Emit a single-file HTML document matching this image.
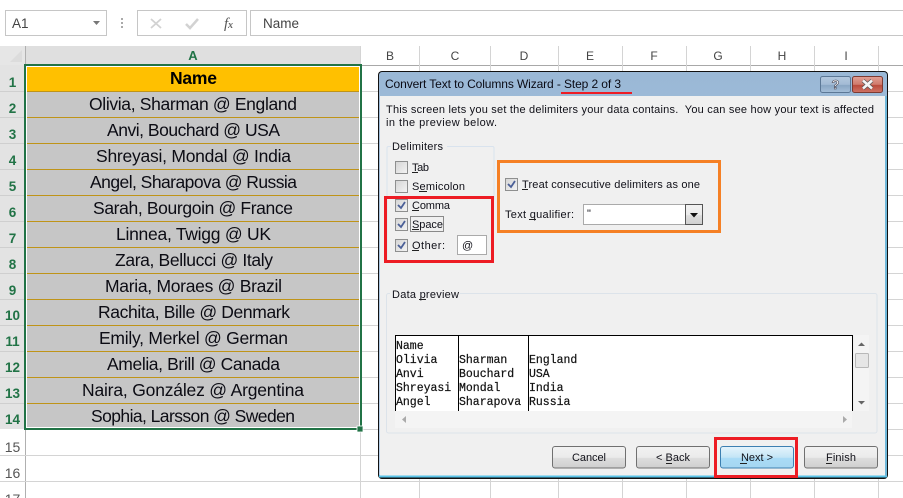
<!DOCTYPE html>
<html><head><meta charset="utf-8"><style>
html,body{margin:0;padding:0;background:#fff;width:903px;height:498px;overflow:hidden}
svg{display:block}
.c{font:17.5px "Liberation Sans",sans-serif;fill:#0c0c14;text-anchor:middle}
.h{font:12px "Liberation Sans",sans-serif;fill:#444;text-anchor:middle}
.n{font:bold 13.5px "Liberation Sans",sans-serif;fill:#217346;text-anchor:middle}
.r{font:14px "Liberation Sans",sans-serif;fill:#555;text-anchor:middle}
.d{font:11px "Liberation Sans",sans-serif;fill:#101018}
.m{font:11.5px "Liberation Mono",monospace;fill:#111;stroke:#111;stroke-width:.2}
.b{font:11px "Liberation Sans",sans-serif;fill:#101018;text-anchor:middle}
</style></head><body>
<svg width="903" height="498" viewBox="0 0 903 498" xmlns="http://www.w3.org/2000/svg">
<defs>
<linearGradient id="tb" x1="0" y1="0" x2="0" y2="1"><stop offset="0" stop-color="#9ab8d6"/><stop offset="1" stop-color="#b9d1ea"/></linearGradient>
<linearGradient id="btn" x1="0" y1="0" x2="0" y2="1"><stop offset="0" stop-color="#f2f2f2"/><stop offset=".5" stop-color="#ebebeb"/><stop offset=".55" stop-color="#dddddd"/><stop offset="1" stop-color="#cfcfcf"/></linearGradient>
<linearGradient id="nxt" x1="0" y1="0" x2="0" y2="1"><stop offset="0" stop-color="#e5f4fc"/><stop offset=".5" stop-color="#c4e5f6"/><stop offset=".55" stop-color="#a9dbf6"/><stop offset="1" stop-color="#a5d6f1"/></linearGradient>
<linearGradient id="hp" x1="0" y1="0" x2="0" y2="1"><stop offset="0" stop-color="#b3c8de"/><stop offset=".5" stop-color="#a3bbd5"/><stop offset=".55" stop-color="#8aa6c4"/><stop offset="1" stop-color="#a5bfd9"/></linearGradient>
<linearGradient id="cl" x1="0" y1="0" x2="0" y2="1"><stop offset="0" stop-color="#e2a095"/><stop offset=".5" stop-color="#cf7a6c"/><stop offset=".55" stop-color="#bb4a3b"/><stop offset="1" stop-color="#cf7466"/></linearGradient>
<linearGradient id="cb" x1="0" y1="0" x2="1" y2="1"><stop offset="0" stop-color="#d4d4d4"/><stop offset="1" stop-color="#f4f4f4"/></linearGradient>
</defs>

<!-- formula bar -->
<rect x="5.500" y="10.500" width="101" height="25" fill="#fff" stroke="#c6c6c6"/>
<text x="12" y="28" style="font:13.500px 'Liberation Sans',sans-serif;fill:#444">A1</text>
<path d="M93 21h7l-3.500 4z" fill="#777"/>
<g fill="#aaa"><rect x="121" y="18" width="2" height="2"/><rect x="121" y="22" width="2" height="2"/><rect x="121" y="26" width="2" height="2"/></g>
<rect x="137.500" y="10.500" width="109" height="25" fill="#fff" stroke="#c6c6c6"/>
<path d="M151 19l10 9M161 19l-10 9" stroke="#d2d2d2" stroke-width="1.800" fill="none"/>
<path d="M186 24l4 4 8-9" stroke="#d2d2d2" stroke-width="2.500" fill="none"/>
<text x="224" y="28" style="font:italic 15px 'Liberation Serif',serif;fill:#555">f</text><text x="228" y="28" style="font:italic bold 10px 'Liberation Serif',serif;fill:#666">x</text>
<rect x="250.500" y="10.500" width="660" height="25" fill="#fff" stroke="#c6c6c6"/>
<text x="263" y="28" style="font:13.500px 'Liberation Sans',sans-serif;fill:#444" textLength="36">Name</text>

<!-- headers -->
<rect x="0" y="46" width="25" height="452" fill="#fff"/>
<rect x="0" y="46" width="25" height="19" fill="#e6e6e6"/>
<path d="M10 62L22 50V62z" fill="#dcdcdc"/>
<rect x="25" y="46" width="336" height="19" fill="#dfdfdf"/>
<rect x="0" y="65" width="25" height="364" fill="#e3e3e3"/>
<g fill="#cfcfcf"><rect x="0" y="91" width="25" height="1"/><rect x="0" y="117" width="25" height="1"/><rect x="0" y="143" width="25" height="1"/><rect x="0" y="169" width="25" height="1"/><rect x="0" y="195" width="25" height="1"/><rect x="0" y="221" width="25" height="1"/><rect x="0" y="247" width="25" height="1"/><rect x="0" y="273" width="25" height="1"/><rect x="0" y="299" width="25" height="1"/><rect x="0" y="325" width="25" height="1"/><rect x="0" y="351" width="25" height="1"/><rect x="0" y="377" width="25" height="1"/><rect x="0" y="403" width="25" height="1"/></g>
<rect x="25" y="65" width="878" height="1" fill="#a8a8a8"/>
<rect x="25" y="46" width="1" height="452" fill="#b0b0b0"/>
<g fill="#d4d4d4">
<rect x="360" y="46" width="1" height="452"/><rect x="419" y="46" width="1" height="452"/><rect x="490" y="46" width="1" height="452"/><rect x="558" y="46" width="1" height="452"/><rect x="622" y="46" width="1" height="452"/><rect x="686" y="46" width="1" height="452"/><rect x="750" y="46" width="1" height="452"/><rect x="814" y="46" width="1" height="452"/><rect x="878" y="46" width="1" height="452"/>
<rect x="361" y="91" width="542" height="1"/><rect x="361" y="117" width="542" height="1"/><rect x="361" y="143" width="542" height="1"/><rect x="361" y="169" width="542" height="1"/><rect x="361" y="195" width="542" height="1"/><rect x="361" y="221" width="542" height="1"/><rect x="361" y="247" width="542" height="1"/><rect x="361" y="273" width="542" height="1"/><rect x="361" y="299" width="542" height="1"/><rect x="361" y="325" width="542" height="1"/><rect x="361" y="351" width="542" height="1"/><rect x="361" y="377" width="542" height="1"/><rect x="361" y="403" width="542" height="1"/><rect x="361" y="429" width="542" height="1"/>
<rect x="0" y="455" width="903" height="1"/><rect x="0" y="481" width="903" height="1"/>
</g>
<text class="n" x="193" y="60" style="font-size:13px">A</text>
<g class="h"><text x="390" y="60">B</text><text x="455" y="60">C</text><text x="524" y="60">D</text><text x="590" y="60">E</text><text x="654" y="60">F</text><text x="718" y="60">G</text><text x="782" y="60">H</text><text x="846" y="60">I</text></g>

<g class="n"><text x="12.500" y="87">1</text><text x="12.500" y="113">2</text><text x="12.500" y="139">3</text><text x="12.500" y="165">4</text><text x="12.500" y="191">5</text><text x="12.500" y="217">6</text><text x="12.500" y="243">7</text><text x="12.500" y="269">8</text><text x="12.500" y="295">9</text><text x="12.500" y="320">10</text><text x="12.500" y="346">11</text><text x="12.500" y="372">12</text><text x="12.500" y="398">13</text><text x="12.500" y="424">14</text></g>
<g class="r"><text x="12.500" y="452">15</text><text x="12.500" y="478">16</text><text x="12.500" y="504">17</text></g>

<!-- selected cells -->
<rect x="27" y="67" width="332" height="361" fill="#c6c6c6"/>
<rect x="27" y="67" width="332" height="24" fill="#ffc000"/>
<g fill="#bf9418">
<rect x="27" y="91" width="332" height="1"/><rect x="27" y="117" width="332" height="1"/><rect x="27" y="143" width="332" height="1"/><rect x="27" y="169" width="332" height="1"/><rect x="27" y="195" width="332" height="1"/><rect x="27" y="221" width="332" height="1"/><rect x="27" y="247" width="332" height="1"/><rect x="27" y="273" width="332" height="1"/><rect x="27" y="299" width="332" height="1"/><rect x="27" y="325" width="332" height="1"/><rect x="27" y="351" width="332" height="1"/><rect x="27" y="377" width="332" height="1"/><rect x="27" y="403" width="332" height="1"/>
</g>
<rect x="26.500" y="66.500" width="333" height="361" fill="none" stroke="#fff"/>
<rect x="25" y="65" width="336" height="364" fill="none" stroke="#217346" stroke-width="2"/>
<rect x="357" y="426" width="6" height="6" fill="#217346" stroke="#fff" stroke-width=".8"/>

<text class="c" x="193.500" y="84" style="font-weight:bold;fill:#000" textLength="47">Name</text>
<text class="c" x="193" y="110" textLength="208">Olivia, Sharman @ England</text>
<text class="c" x="193.500" y="136" textLength="173">Anvi, Bouchard @ USA</text>
<text class="c" x="193.500" y="162" textLength="195">Shreyasi, Mondal @ India</text>
<text class="c" x="193.500" y="188" textLength="207">Angel, Sharapova @ Russia</text>
<text class="c" x="193" y="214" textLength="200">Sarah, Bourgoin @ France</text>
<text class="c" x="193.500" y="240" textLength="155">Linnea, Twigg @ UK</text>
<text class="c" x="194" y="266" textLength="158">Zara, Bellucci @ Italy</text>
<text class="c" x="193.500" y="292" textLength="177">Maria, Moraes @ Brazil</text>
<text class="c" x="194" y="318" textLength="192">Rachita, Bille @ Denmark</text>
<text class="c" x="193.500" y="344" textLength="189">Emily, Merkel @ German</text>
<text class="c" x="193.500" y="370" textLength="173">Amelia, Brill @ Canada</text>
<text class="c" x="193" y="396" textLength="222">Naira, González @ Argentina</text>
<text class="c" x="193" y="422" textLength="204">Sophia, Larsson @ Sweden</text>

<!-- dialog -->
<rect x="378" y="71" width="510" height="408" rx="4" fill="#111"/>
<rect x="379" y="72" width="508" height="405.500" rx="3" fill="url(#tb)"/>
<rect x="379" y="475" width="508" height="2.500" fill="#59c3e8"/>
<rect x="380" y="96" width="506" height="379.500" fill="#f0f0f0"/>
<rect x="885" y="96" width="2" height="380" fill="#6fb8da"/>
<text x="385" y="88" style="font:12px 'Liberation Sans',sans-serif;fill:#0a0a14" textLength="236">Convert Text to Columns Wizard - Step 2 of 3</text>
<rect x="561" y="92" width="71" height="2" fill="#ed1c24"/>

<rect x="820.500" y="76.500" width="30" height="16" rx="2" fill="url(#hp)" stroke="#5c7896"/>
<text x="835.500" y="89" style="font:bold 13px 'Liberation Sans',sans-serif;fill:#f4f4f4;stroke:#445;stroke-width:.6;text-anchor:middle">?</text>
<rect x="852.500" y="76.500" width="30" height="16" rx="2" fill="url(#cl)" stroke="#7d3a32"/>
<path d="M863 80.500l9 8M872 80.500l-9 8" stroke="#555" stroke-width="4" fill="none"/>
<path d="M863 80.500l9 8M872 80.500l-9 8" stroke="#f5f5f5" stroke-width="2.600" fill="none"/>

<text class="d" x="386" y="113" textLength="488">This screen lets you set the delimiters your data contains.&#160; You can see how your text is affected</text>
<text class="d" x="386" y="126" textLength="111">in the preview below.</text>

<!-- Delimiters group -->
<path d="M391 146.500H388.500a1.500 1.500 0 0 0-1.500 1.500V262M447 146.500H492.500a1.500 1.500 0 0 1 1.500 1.500V200" fill="none" stroke="#d9e3ee"/>
<text class="d" x="392" y="150" textLength="51">Delimiters</text>

<g stroke="#8e8f8f" fill="url(#cb)">
<rect x="395.500" y="161.500" width="12" height="12"/><rect x="395.500" y="180.500" width="12" height="12"/><rect x="395.500" y="199.500" width="12" height="12"/><rect x="395.500" y="218.500" width="12" height="12"/><rect x="395.500" y="239.500" width="12" height="12"/><rect x="505.500" y="178.500" width="12" height="12"/>
</g>
<g fill="none" stroke="#4a5f97" stroke-width="1.800">
<path d="M398 205l3 3 4-6"/><path d="M398 224l3 3 4-6"/><path d="M398 245l3 3 4-6"/><path d="M508 184l3 3 4-6"/>
</g>
<text class="d" x="412" y="171" textLength="17">Tab</text><rect x="412" y="172" width="6" height="1" fill="#222"/>
<text class="d" x="412" y="190" textLength="53">Semicolon</text><rect x="419" y="191" width="8" height="1" fill="#222"/>
<text class="d" x="412" y="209" textLength="38">Comma</text><rect x="412" y="210" width="7" height="1" fill="#222"/>
<text class="d" x="412" y="228" textLength="31">Space</text><rect x="412" y="229" width="7" height="1" fill="#222"/>
<rect x="410.500" y="216.500" width="33" height="15" fill="none" stroke="#222" stroke-dasharray="1 1"/>
<text class="d" x="412" y="249" textLength="33">Other:</text><rect x="412" y="250" width="7" height="1" fill="#222"/>
<rect x="457.500" y="235.500" width="29" height="19" fill="#fff" stroke="#aaa"/>
<text class="d" x="462" y="249">@</text>

<text class="d" x="522" y="188" textLength="178">Treat consecutive delimiters as one</text><rect x="522" y="189" width="6" height="1" fill="#222"/>
<text class="d" x="505" y="218" textLength="69">Text qualifier:</text><rect x="529" y="219" width="7" height="1" fill="#222"/>
<rect x="583.500" y="204.500" width="119" height="20" fill="#fff" stroke="#aaa"/>
<text class="d" x="587" y="217">"</text>
<rect x="685.500" y="204.500" width="17" height="20" fill="url(#btn)" stroke="#555"/>
<path d="M690 213h8l-4 4.500z" fill="#111"/>

<rect x="385.500" y="197.500" width="107" height="64" fill="none" stroke="#ed1c24" stroke-width="3"/>
<rect x="498.500" y="161.500" width="221" height="70" fill="none" stroke="#f58025" stroke-width="3"/>

<!-- Data preview -->
<path d="M390 293.500H388.500a2 2 0 0 0-2 2V431a2 2 0 0 0 2 2H875a2 2 0 0 0 2-2V295.500a2 2 0 0 0-2-2H460" fill="none" stroke="#dce3ea"/>
<text class="d" x="392" y="298" textLength="67">Data preview</text><rect x="419" y="299" width="7" height="1" fill="#222"/>
<rect x="395" y="335" width="457" height="76" fill="#fff"/>
<path d="M395.500 411V335.500H852.500V411M458.500 335V411M528.500 335V411" fill="none" stroke="#000"/>
<g class="m">
<text x="396" y="349">Name</text>
<text x="396" y="363">Olivia</text><text x="459" y="363">Sharman</text><text x="529" y="363">England</text>
<text x="396" y="377">Anvi</text><text x="459" y="377">Bouchard</text><text x="529" y="377">USA</text>
<text x="396" y="391">Shreyasi</text><text x="459" y="391">Mondal</text><text x="529" y="391">India</text>
<text x="396" y="405">Angel</text><text x="459" y="405">Sharapova</text><text x="529" y="405">Russia</text>
</g>
<rect x="854" y="335" width="15" height="76" fill="#f4f4f4"/>
<rect x="855.500" y="353.500" width="13" height="14" rx="1" fill="#e6e6e6" stroke="#b8b8b8"/>
<path d="M858 346l3.500-3.500 3.500 3.500z" fill="#666"/><path d="M858 401l3.500 3.500 3.500-3.500z" fill="#666"/>
<rect x="395" y="411" width="457" height="17" fill="#f4f4f4"/>
<path d="M406 416v7l-4-3.500z" fill="#aaa"/><path d="M843 416v7l4-3.500z" fill="#aaa"/>

<!-- buttons -->
<rect x="552.500" y="446.500" width="73" height="21.500" rx="2.500" fill="url(#btn)" stroke="#707070"/>
<rect x="636.500" y="446.500" width="73" height="21.500" rx="2.500" fill="url(#btn)" stroke="#707070"/>
<rect x="720.500" y="446.500" width="73" height="21.500" rx="2.500" fill="url(#nxt)" stroke="#3c7fb1"/>
<rect x="804.500" y="446.500" width="73" height="21.500" rx="2.500" fill="url(#btn)" stroke="#707070"/>
<text class="b" x="589" y="461" textLength="34">Cancel</text>
<text class="b" x="673" y="461" textLength="34">&lt; Back</text><rect x="666" y="463" width="6" height="1" fill="#222"/>
<text class="b" x="757" y="461" textLength="32">Next &gt;</text><rect x="740" y="463" width="7" height="1" fill="#222"/>
<text class="b" x="841" y="461" textLength="30">Finish</text><rect x="826" y="463" width="6" height="1" fill="#222"/>
<rect x="715.500" y="438.500" width="81" height="38" fill="none" stroke="#ed1c24" stroke-width="3"/>
</svg>
</body></html>
